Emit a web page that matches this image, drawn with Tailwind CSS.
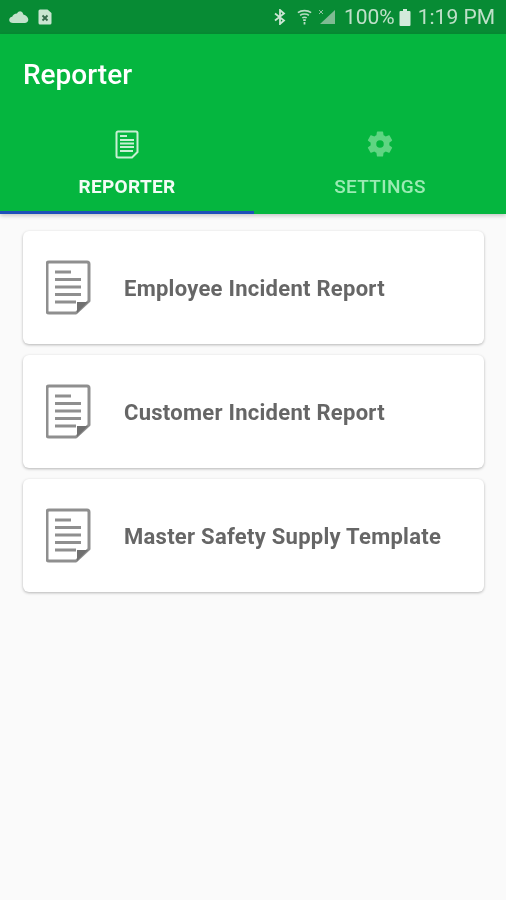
<!DOCTYPE html>
<html>
<head>
<meta charset="utf-8">
<script src="https://cdn.jsdelivr.net/npm/@tailwindcss/browser@4"></script>
</head>
<body class="m-0 bg-[#fafafa] font-['Roboto',sans-serif]">
<div class="w-[506px] h-[900px] flex flex-col overflow-hidden bg-[#fafafa] blur-[0.7px]">
  <!-- status bar -->
  <div class="h-[34px] bg-[#078b34] flex items-center pl-[9px] pr-[11px] shrink-0">
    <svg width="20" height="14" viewBox="0 0 20 13"><path fill="#c3e2cc" d="M4 12.500C1.800 12.500.200 11.200.200 9.400.200 7.800 1.500 6.500 3.200 6.300 3.800 4.300 5.600 2.900 8 2.900c.900-1.400 2.300-2.200 3.600-2 1.600.200 2.500 1.400 2.700 3 2.900.600 5 2.900 5 5.200 0 2.200-1.500 3.400-3.600 3.400z"/></svg>
    <svg width="14" height="16" viewBox="0 0 14 16" class="ml-[9px]"><path fill="#c9e5d1" d="M2 .500h7.500L13.500 4v10a1.500 1.500 0 0 1-1.500 1.500H2A1.500 1.500 0 0 1 .500 14V2A1.500 1.500 0 0 1 2 .500z"/><path stroke="#35694a" stroke-width="1.800" fill="none" d="M4.500 6.500l5 5M9.500 6.500l-5 5"/></svg>
    <div class="ml-auto flex items-center">
      <svg width="12" height="16" viewBox="0 0 12 16"><path fill="none" stroke="#cbe6d3" stroke-width="1.800" d="M1 4.500l9 7-4 3.500V1l4 3.500-9 7"/></svg>
      <svg width="15" height="17" viewBox="0 0 17 18" class="ml-[11px]"><path fill="none" stroke="#b9dcc4" stroke-width="1.800" d="M1 3.500c4-3 11-3 15 0M3.500 6.500c2.500-2 7.500-2 10 0M6 9.500c1.500-1 3.500-1 5 0"/><path fill="#b9dcc4" d="M7 11h3v2H7zM7.500 14h2v3h-2z"/></svg>
      <svg width="18" height="16" viewBox="0 0 18 16" class="ml-[6px]"><path fill="#7fbb93" d="M17 1v14H2z"/><path stroke="#8fc4a1" stroke-width="1" fill="none" d="M1 1l4 4M5 1L1 5"/></svg>
      <span class="ml-[8px] text-[21px] leading-[24px] text-[#bfe0c9]">100%</span>
      <svg width="12" height="17" viewBox="0 0 12 17" class="ml-[4px]"><path fill="#d3eadb" d="M4 0h4v2h2.500a1 1 0 0 1 1 1v13a1 1 0 0 1-1 1h-9a1 1 0 0 1-1-1V3a1 1 0 0 1 1-1H4z"/></svg>
      <span class="ml-[7px] text-[21px] leading-[24px] text-[#bfe0c9]">1:19 PM</span>
    </div>
  </div>
  <!-- app bar -->
  <div class="bg-[#05b63f] h-[180px] shrink-0 flex flex-col shadow-[0_2px_4px_rgba(0,0,0,0.2)] relative">
    <div class="h-[82px] pl-[23px] pt-[24px] text-[28px] leading-[34px] font-medium text-white">Reporter</div>
    <div class="flex flex-1">
      <div class="w-[254px] flex flex-col items-center border-b-[3px] border-[#1d50b8]">
        <svg width="24" height="29" viewBox="0 0 24 29" class="mt-[14px]">
          <path fill="none" stroke="#c8f0d4" stroke-width="2" d="M3 1.500h18a1.500 1.500 0 0 1 1.500 1.500v19l-5.500 5.500H3A1.500 1.500 0 0 1 1.500 26V3A1.500 1.500 0 0 1 3 1.500z"/>
          <path fill="none" stroke="#c8f0d4" stroke-width="2" d="M5 6h7M5 10h14M5 13.500h14M5 17h14M5 21h13"/>
        </svg>
        <div class="mt-[17px] text-[19px] leading-[22px] font-bold tracking-[0.3px] text-[#f2fcf5]">REPORTER</div>
      </div>
      <div class="flex-1 flex flex-col items-center">
        <svg width="30" height="30" viewBox="0 0 24 24" class="mt-[13px]">
          <path fill-rule="evenodd" fill="#5fd582" d="M19.430 12.980c.040-.320.070-.640.070-.980s-.030-.660-.070-.980l2.110-1.650c.190-.150.240-.420.120-.640l-2-3.460c-.120-.220-.390-.300-.610-.220l-2.490 1c-.520-.400-1.080-.730-1.690-.980l-.380-2.650A.488.488 0 0 0 14 2h-4c-.250 0-.460.180-.490.420l-.380 2.650c-.610.250-1.170.590-1.690.980l-2.490-1c-.230-.090-.490 0-.610.220l-2 3.460c-.130.220-.070.490.120.640l2.110 1.650c-.040.320-.070.650-.070.980s.030.660.070.980l-2.110 1.650c-.190.150-.240.420-.120.640l2 3.460c.120.220.390.300.610.220l2.490-1c.520.400 1.080.730 1.690.980l.380 2.650c.030.240.240.420.490.420h4c.250 0 .460-.180.490-.420l.380-2.650c.610-.250 1.170-.590 1.690-.980l2.490 1c.230.090.490 0 .610-.220l2-3.460c.120-.220.070-.490-.120-.640l-2.110-1.650zM12 15a3 3 0 1 1 0-6 3 3 0 0 1 0 6z"/>
        </svg>
        <div class="mt-[17px] text-[19px] leading-[22px] font-medium tracking-[0.3px] text-[#9bebb3]">SETTINGS</div>
      </div>
    </div>
  </div>
  <!-- cards -->
  <div class="flex flex-col gap-[11px] pl-[23px] pr-[22px] pt-[17px]">
    <div class="h-[113px] bg-white rounded-[6px] shadow-[0_1px_3px_rgba(0,0,0,0.28)] flex items-center">
      <svg width="46" height="56" viewBox="0 0 46 56" class="ml-[23px] shrink-0">
        <path fill="none" stroke="#8f8f8f" stroke-width="3" stroke-linejoin="round" d="M3 2h38a2 2 0 0 1 2 2v37L30 53H3a2 2 0 0 1-2-2V4a2 2 0 0 1 2-2z"/>
        <path fill="#707070" d="M31 42h11L31 53z"/>
        <path fill="none" stroke="#8f8f8f" stroke-width="3" d="M9 12h16M9 19.500h26M9 27h26M9 34.500h26M9 42h21"/>
      </svg>
      <span class="ml-[32px] pt-[2px] text-[22px] leading-[28px] font-bold text-[#666666] tracking-[0.27px]">Employee Incident Report</span>
    </div>
    <div class="h-[113px] bg-white rounded-[6px] shadow-[0_1px_3px_rgba(0,0,0,0.28)] flex items-center">
      <svg width="46" height="56" viewBox="0 0 46 56" class="ml-[23px] shrink-0">
        <path fill="none" stroke="#8f8f8f" stroke-width="3" stroke-linejoin="round" d="M3 2h38a2 2 0 0 1 2 2v37L30 53H3a2 2 0 0 1-2-2V4a2 2 0 0 1 2-2z"/>
        <path fill="#707070" d="M31 42h11L31 53z"/>
        <path fill="none" stroke="#8f8f8f" stroke-width="3" d="M9 12h16M9 19.500h26M9 27h26M9 34.500h26M9 42h21"/>
      </svg>
      <span class="ml-[32px] pt-[2px] text-[22px] leading-[28px] font-bold text-[#666666] tracking-[0.27px]">Customer Incident Report</span>
    </div>
    <div class="h-[113px] bg-white rounded-[6px] shadow-[0_1px_3px_rgba(0,0,0,0.28)] flex items-center">
      <svg width="46" height="56" viewBox="0 0 46 56" class="ml-[23px] shrink-0">
        <path fill="none" stroke="#8f8f8f" stroke-width="3" stroke-linejoin="round" d="M3 2h38a2 2 0 0 1 2 2v37L30 53H3a2 2 0 0 1-2-2V4a2 2 0 0 1 2-2z"/>
        <path fill="#707070" d="M31 42h11L31 53z"/>
        <path fill="none" stroke="#8f8f8f" stroke-width="3" d="M9 12h16M9 19.500h26M9 27h26M9 34.500h26M9 42h21"/>
      </svg>
      <span class="ml-[32px] pt-[2px] text-[22px] leading-[28px] font-bold text-[#666666] tracking-[0.27px]">Master Safety Supply Template</span>
    </div>
  </div>
</div>
</body>
</html>
